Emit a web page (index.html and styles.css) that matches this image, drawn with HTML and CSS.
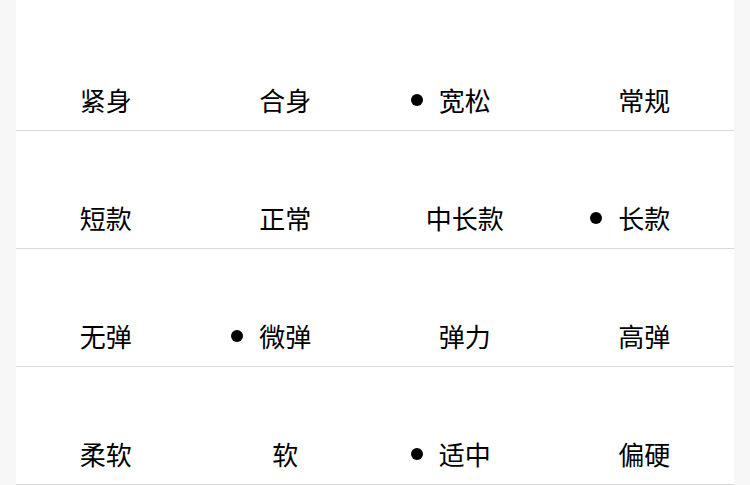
FILE: index.html
```html
<!DOCTYPE html>
<html lang="zh">
<head>
<meta charset="utf-8">
<link rel="stylesheet" href="styles.css">
</head>
<body>
<div class="panel">
  <div class="row">
    <div class="opt"><span class="label">紧身</span></div>
    <div class="opt"><span class="label">合身</span></div>
    <div class="opt"><span class="label selected">宽松</span></div>
    <div class="opt"><span class="label">常规</span></div>
  </div>
  <div class="row">
    <div class="opt"><span class="label">短款</span></div>
    <div class="opt"><span class="label">正常</span></div>
    <div class="opt"><span class="label">中长款</span></div>
    <div class="opt"><span class="label selected">长款</span></div>
  </div>
  <div class="row">
    <div class="opt"><span class="label">无弹</span></div>
    <div class="opt"><span class="label selected">微弹</span></div>
    <div class="opt"><span class="label">弹力</span></div>
    <div class="opt"><span class="label">高弹</span></div>
  </div>
  <div class="row">
    <div class="opt"><span class="label">柔软</span></div>
    <div class="opt"><span class="label">软</span></div>
    <div class="opt"><span class="label selected">适中</span></div>
    <div class="opt"><span class="label">偏硬</span></div>
  </div>
</div>
</body>
</html>
```
FILE: styles.css
```css
html, body {
  margin: 0;
  padding: 0;
  background: #f7f7f7;
  height: 100%;
  overflow: hidden;
}
.panel {
  margin: 0 16px;
  background: #ffffff;
  padding-top: 13px;
  font-family: "Noto Sans CJK SC", "Noto Sans", sans-serif;
  color: #000000;
}
.row {
  height: 117px;
  border-bottom: 1px solid #d9d9d9;
  display: grid;
  grid-template-columns: repeat(4, 1fr);
  align-items: end;
}
.opt {
  text-align: center;
  padding-bottom: 12px;
}
.label {
  position: relative;
  display: inline-block;
  font-size: 26px;
  line-height: 36px;
}
.label.selected::before {
  content: "";
  position: absolute;
  left: -28px;
  top: 12px;
  width: 12px;
  height: 12px;
  border-radius: 50%;
  background: #000;
}
```
